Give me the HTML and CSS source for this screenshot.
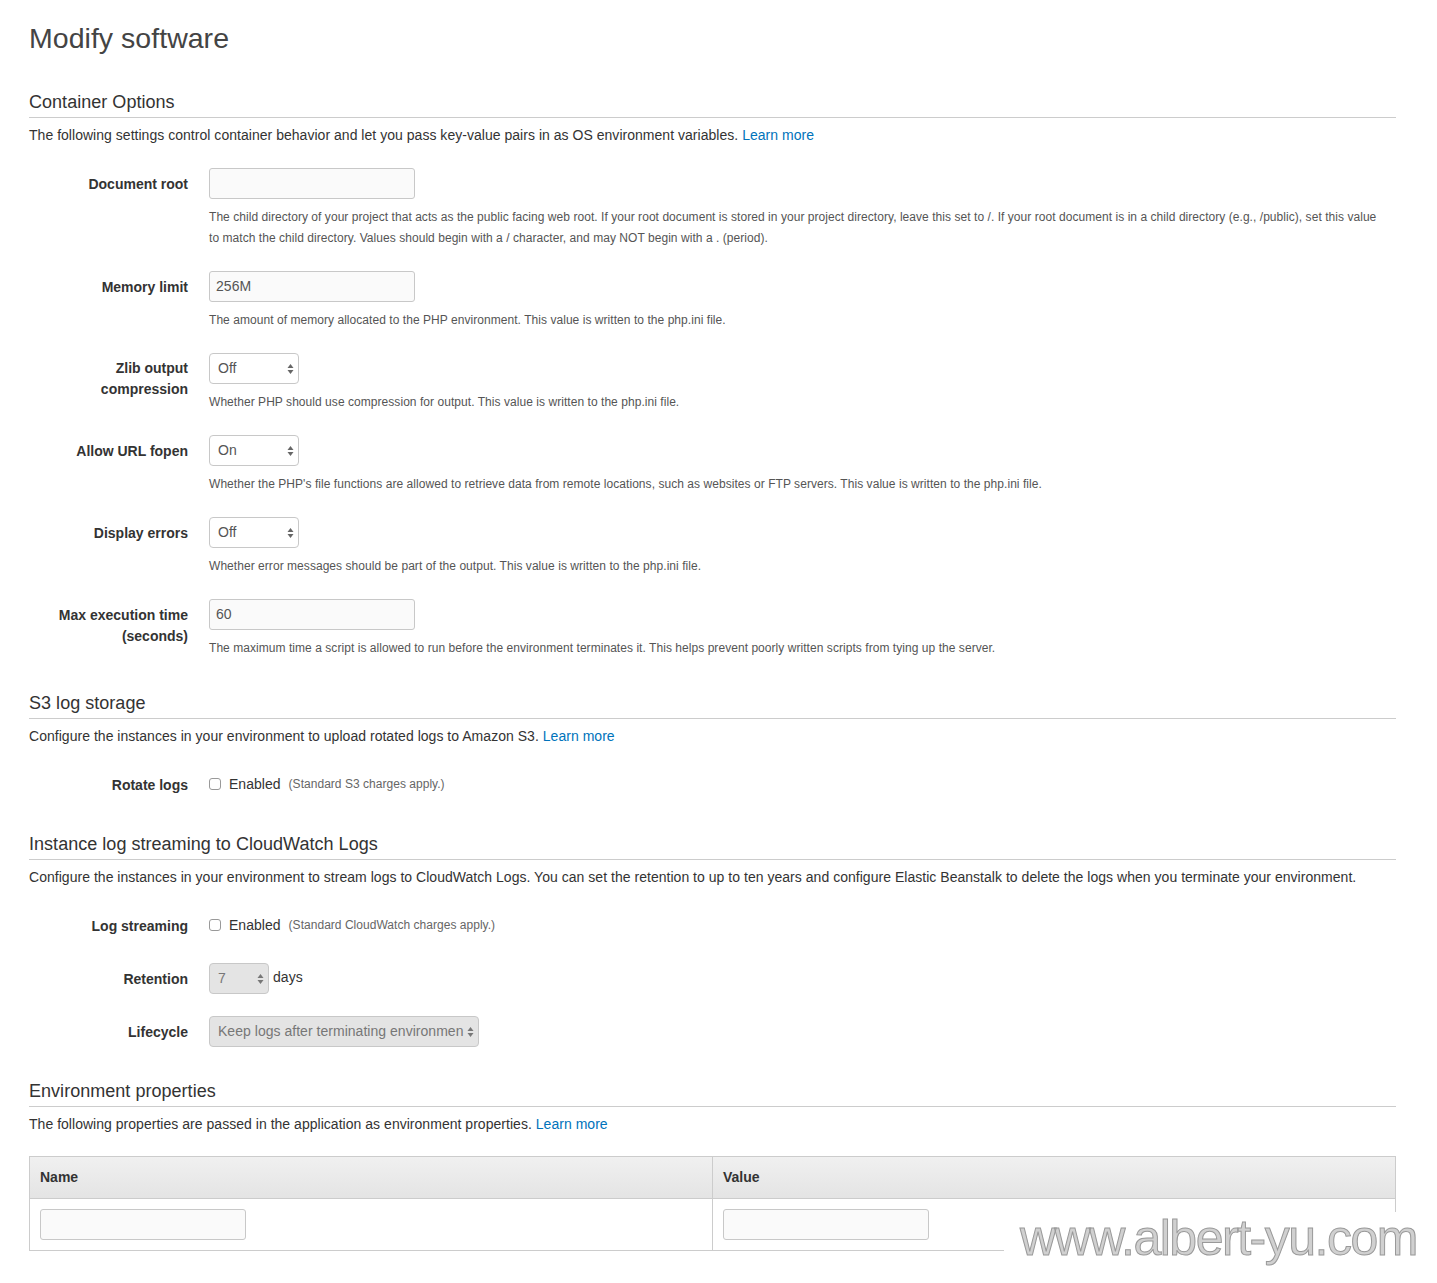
FILE: index.html
```html
<!DOCTYPE html>
<html>
<head>
<meta charset="utf-8">
<title>Modify software</title>
<link rel="stylesheet" href="styles.css">
</head>
<body>
<div class="page">
  <h1 class="title">Modify software</h1>

  <section class="section">
    <h2 class="section-head">Container Options</h2>
    <p class="section-desc">The following settings control container behavior and let you pass key-value pairs in as OS environment variables. <a href="#" class="link">Learn more</a></p>

    <div class="row">
      <div class="label">Document root</div>
      <div class="field">
        <div class="input"></div>
        <p class="help">The child directory of your project that acts as the public facing web root. If your root document is stored in your project directory, leave this set to /. If your root document is in a child directory (e.g., /public), set this value to match the child directory. Values should begin with a / character, and may NOT begin with a . (period).</p>
      </div>
    </div>

    <div class="row">
      <div class="label">Memory limit</div>
      <div class="field">
        <div class="input">256M</div>
        <p class="help">The amount of memory allocated to the PHP environment. This value is written to the php.ini file.</p>
      </div>
    </div>

    <div class="row">
      <div class="label label-tight">Zlib output compression</div>
      <div class="field">
        <div class="select sel-small"><span>Off</span><svg class="arrows" width="7" height="12" viewBox="0 0 7 12"><path d="M3.5 1 L6.5 5 L0.5 5 Z M3.5 11 L6.5 7 L0.5 7 Z" fill="#666"/></svg></div>
        <p class="help">Whether PHP should use compression for output. This value is written to the php.ini file.</p>
      </div>
    </div>

    <div class="row">
      <div class="label">Allow URL fopen</div>
      <div class="field">
        <div class="select sel-small"><span>On</span><svg class="arrows" width="7" height="12" viewBox="0 0 7 12"><path d="M3.5 1 L6.5 5 L0.5 5 Z M3.5 11 L6.5 7 L0.5 7 Z" fill="#666"/></svg></div>
        <p class="help">Whether the PHP's file functions are allowed to retrieve data from remote locations, such as websites or FTP servers. This value is written to the php.ini file.</p>
      </div>
    </div>

    <div class="row">
      <div class="label">Display errors</div>
      <div class="field">
        <div class="select sel-small"><span>Off</span><svg class="arrows" width="7" height="12" viewBox="0 0 7 12"><path d="M3.5 1 L6.5 5 L0.5 5 Z M3.5 11 L6.5 7 L0.5 7 Z" fill="#666"/></svg></div>
        <p class="help">Whether error messages should be part of the output. This value is written to the php.ini file.</p>
      </div>
    </div>

    <div class="row">
      <div class="label">Max execution time (seconds)</div>
      <div class="field">
        <div class="input">60</div>
        <p class="help">The maximum time a script is allowed to run before the environment terminates it. This helps prevent poorly written scripts from tying up the server.</p>
      </div>
    </div>
  </section>

  <section class="section">
    <h2 class="section-head">S3 log storage</h2>
    <p class="section-desc">Configure the instances in your environment to upload rotated logs to Amazon S3. <a href="#" class="link">Learn more</a></p>

    <div class="row">
      <div class="label">Rotate logs</div>
      <div class="field check-field">
        <span class="checkbox"></span><span class="check-text">Enabled</span><span class="note">(Standard S3 charges apply.)</span>
      </div>
    </div>
  </section>

  <section class="section">
    <h2 class="section-head">Instance log streaming to CloudWatch Logs</h2>
    <p class="section-desc">Configure the instances in your environment to stream logs to CloudWatch Logs. You can set the retention to up to ten years and configure Elastic Beanstalk to delete the logs when you terminate your environment.</p>

    <div class="row">
      <div class="label">Log streaming</div>
      <div class="field check-field">
        <span class="checkbox"></span><span class="check-text">Enabled</span><span class="note">(Standard CloudWatch charges apply.)</span>
      </div>
    </div>

    <div class="row">
      <div class="label">Retention</div>
      <div class="field inline-field">
        <div class="select sel-tiny disabled"><span>7</span><svg class="arrows" width="7" height="12" viewBox="0 0 7 12"><path d="M3.5 1 L6.5 5 L0.5 5 Z M3.5 11 L6.5 7 L0.5 7 Z" fill="#777"/></svg></div>
        <span class="unit">days</span>
      </div>
    </div>

    <div class="row">
      <div class="label">Lifecycle</div>
      <div class="field">
        <div class="select sel-wide disabled"><span>Keep logs after terminating environmen</span><svg class="arrows" width="7" height="12" viewBox="0 0 7 12"><path d="M3.5 1 L6.5 5 L0.5 5 Z M3.5 11 L6.5 7 L0.5 7 Z" fill="#777"/></svg></div>
      </div>
    </div>
  </section>

  <section class="section">
    <h2 class="section-head">Environment properties</h2>
    <p class="section-desc">The following properties are passed in the application as environment properties. <a href="#" class="link">Learn more</a></p>

    <div class="props">
      <div class="props-head">
        <div class="props-cell">Name</div>
        <div class="props-cell">Value</div>
      </div>
      <div class="props-row">
        <div class="props-cell"><div class="input"></div></div>
        <div class="props-cell"><div class="input"></div></div>
      </div>
    </div>
  </section>
</div>
<div class="watermark">www.albert-yu.com</div>
</body>
</html>
```

FILE: styles.css
```css
* { box-sizing: border-box; }

html, body {
  margin: 0;
  padding: 0;
  background: #fff;
}

body {
  font-family: "Liberation Sans", Arial, Helvetica, sans-serif;
  font-size: 14px;
  line-height: 21px;
  color: #333;
  position: relative;
  min-height: 1283px;
  letter-spacing: 0.03px;
}

.page {
  padding: 21px 41px 30px 29px;
}

.title {
  margin: 0;
  font-size: 28.5px;
  line-height: 34px;
  font-weight: normal;
  color: #444;
}

.section {
  margin-top: 36px;
}

.section + .section {
  margin-top: 33px;
}

.section-head {
  margin: 0;
  font-size: 18px;
  line-height: 22px;
  font-weight: normal;
  color: #333;
  padding-bottom: 4px;
  border-bottom: 1px solid #ccc;
}

.section-desc {
  margin: 7px 0 0 0;
  font-size: 14px;
  line-height: 21px;
  color: #333;
}

.link {
  color: #0073bb;
  text-decoration: none;
}

.row {
  display: grid;
  grid-template-columns: 159px 1fr;
  column-gap: 21px;
  margin-top: 22px;
}

.label {
  text-align: right;
  font-weight: bold;
  font-size: 14px;
  line-height: 21px;
  padding-top: 6px;
  color: #333;
  letter-spacing: 0;
}

.label-tight {
  padding-top: 5px;
}

.field {
  min-width: 0;
}

.input {
  width: 206px;
  height: 31px;
  border: 1px solid #c8c8c8;
  border-radius: 3px;
  background: #fafafa;
  padding: 0 6px;
  font-size: 14px;
  line-height: 29px;
  color: #555;
}

.help {
  margin: 8px 0 0 0;
  padding-right: 12px;
  font-size: 12px;
  line-height: 21px;
  color: #555;
  letter-spacing: 0.05px;
}

.select {
  display: flex;
  align-items: center;
  justify-content: space-between;
  height: 31px;
  border: 1px solid #c8c8c8;
  border-radius: 4px;
  background: #fff;
  padding: 0 4px 0 8px;
  font-size: 14px;
  color: #555;
  white-space: nowrap;
  overflow: hidden;
}

.select .arrows {
  flex: none;
}

.sel-small { width: 90px; }
.sel-tiny { width: 60px; }
.sel-wide { width: 270px; }

.select.disabled {
  background: #e4e4e4;
  color: #777;
}

.check-field {
  display: flex;
  align-items: center;
  height: 31px;
}

.checkbox {
  width: 12px;
  height: 12px;
  border: 1px solid #999;
  border-radius: 3px;
  background: #fff;
  margin-right: 8px;
  margin-top: -1px;
}

.check-text {
  font-size: 14px;
  color: #333;
  margin-right: 8px;
}

.note {
  font-size: 12px;
  color: #666;
}

.inline-field {
  display: flex;
  align-items: flex-start;
}

.unit {
  margin-left: 4px;
  font-size: 14px;
  line-height: 29px;
  color: #333;
}

.props {
  margin-top: 21px;
  border: 1px solid #ccc;
}

.props-head,
.props-row {
  display: grid;
  grid-template-columns: 682px 1fr;
}

.props-head {
  height: 42px;
  background: linear-gradient(#f0f0f0, #e4e4e4);
  border-bottom: 1px solid #ccc;
}

.props-head .props-cell {
  font-weight: bold;
  font-size: 14px;
  line-height: 41px;
  padding: 0 10px;
  color: #333;
  letter-spacing: 0;
}

.props-row .props-cell {
  padding: 10px;
}

.props-cell + .props-cell {
  border-left: 1px solid #ccc;
}

.watermark {
  position: absolute;
  left: 1004px;
  top: 1212px;
  padding: 0 18px 0 16px;
  background: #fff;
  font-family: "Liberation Sans", Arial, sans-serif;
  font-size: 50px;
  line-height: 52px;
  white-space: nowrap;
  color: #d0d0d0;
  -webkit-text-stroke: 1px #999;
  letter-spacing: -1.5px;
}
```
